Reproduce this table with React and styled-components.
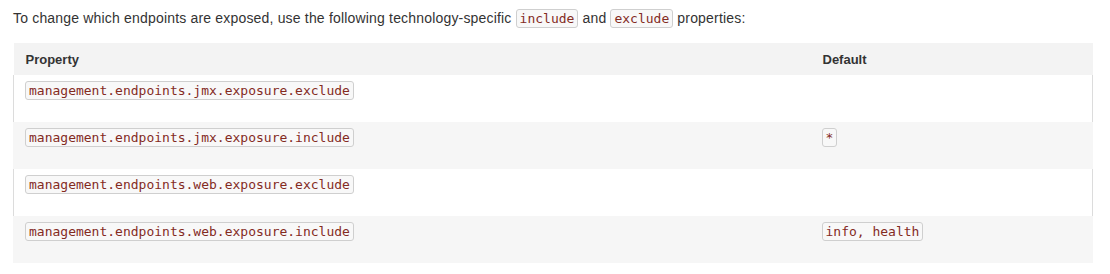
import React from "react"
import styled, { createGlobalStyle } from "styled-components"

const GlobalStyle = createGlobalStyle`
  body {
    margin: 0;
    background: #fff;
    font-family: "Liberation Sans", Arial, sans-serif;
    color: #333;
  }
`

const Wrapper = styled.main`
  padding: 8px 17px 0 13px;
`

const Intro = styled.p`
  margin: 0 0 15px;
  font-size: 14px;
  line-height: 20px;
  letter-spacing: 0.18px;
  color: #333;
`

const Code = styled.code`
  font-family: "DejaVu Sans Mono", "Liberation Mono", monospace;
  font-size: 13px;
  line-height: 17px;
  letter-spacing: 0;
  color: #842b1f;
  background: #f8f8f8;
  border: 1px solid #cfcfcf;
  border-radius: 3px;
  padding: 0 3px;
  display: inline-block;
`

const Table = styled.table`
  width: 1080px;
  border-collapse: collapse;
  border-spacing: 0;
  font-size: 13px;
`

const HeadCell = styled.th`
  background: #f3f3f3;
  text-align: left;
  font-weight: bold;
  font-size: 13px;
  color: #333;
  height: 32px;
  padding: 0 12px;
  vertical-align: middle;
`

const Row = styled.tr`
  background: ${(prop) => (prop.striped ? "#f6f6f6" : "#fff")};

  td:first-child {
    border-left: 1px solid ${(prop) => (prop.striped ? "#f6f6f6" : "#dcdcdc")};
  }

  td:last-child {
    border-right: 1px solid ${(prop) => (prop.striped ? "#f6f6f6" : "#dcdcdc")};
  }
`

const Cell = styled.td`
  height: 47px;
  box-sizing: border-box;
  padding: 6px 11px 0;
  vertical-align: top;
  width: ${(prop) => prop.width || "auto"};
`

const rows = [
  { name: "management.endpoints.jmx.exposure.exclude", value: "" },
  { name: "management.endpoints.jmx.exposure.include", value: "*" },
  { name: "management.endpoints.web.exposure.exclude", value: "" },
  { name: "management.endpoints.web.exposure.include", value: "info, health" },
]

function App() {
  return (
    <>
      <GlobalStyle />
      <Wrapper>
        <Intro>
          To change which endpoints are exposed, use the following
          technology-specific <Code>include</Code> and <Code>exclude</Code>{" "}
          properties:
        </Intro>

        <Table>
          <thead>
            <tr>
              <HeadCell style={{ width: 773 }}>Property</HeadCell>
              <HeadCell>Default</HeadCell>
            </tr>
          </thead>
          <tbody>
            {rows.map((row, index) => (
              <Row key={row.name} striped={index % 2 === 1}>
                <Cell width="797px">
                  <Code>{row.name}</Code>
                </Cell>
                <Cell>{row.value && <Code>{row.value}</Code>}</Cell>
              </Row>
            ))}
          </tbody>
        </Table>
      </Wrapper>
    </>
  )
}

export default App
